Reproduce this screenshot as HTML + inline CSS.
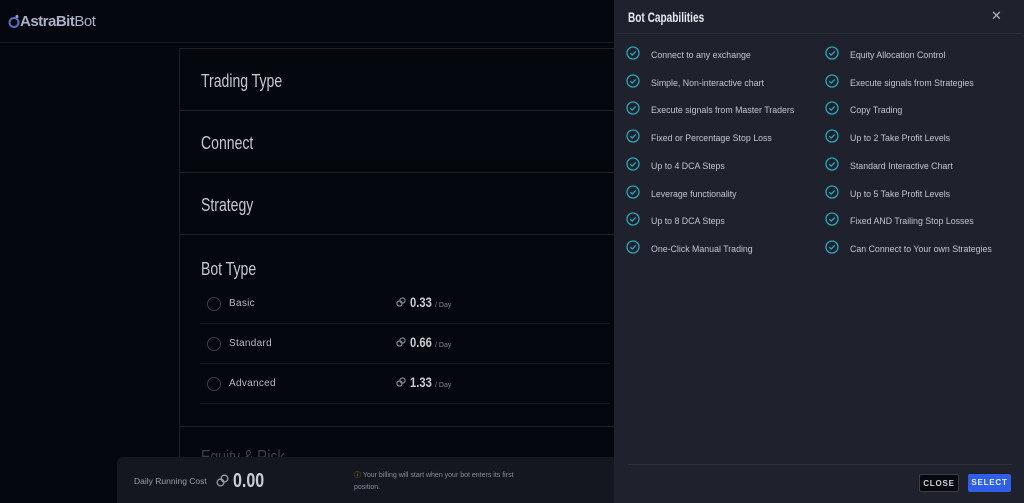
<!DOCTYPE html>
<html><head><meta charset="utf-8"><style>
*{margin:0;padding:0;box-sizing:border-box}
body{width:1024px;height:503px;overflow:hidden;background:#05070e;font-family:"Liberation Sans",sans-serif;position:relative;color:#c9ccd4}
.hdr{position:absolute;left:0;top:0;width:1024px;height:43px;border-bottom:1px solid #161a24}
.logo{position:absolute;left:8px;top:13px;font-size:15px;color:#aab0c8;font-weight:bold;letter-spacing:-0.5px}
.logo span{font-weight:normal}
.card{position:absolute;left:179px;top:48px;width:460px;height:420px;border:1px solid #1d212b;border-right:none}
.row{position:absolute;left:0;width:100%;border-bottom:1px solid #1d212b}
.cond{color:#c5c8cf;font-size:18px;position:absolute;left:21px;transform:scaleX(0.78);transform-origin:0 0;white-space:nowrap}
.opt{position:absolute;left:20px;width:410px;height:40px;border-bottom:1px solid #161a23;font-size:10px;color:#b7bac2}
.opt .r{position:absolute;left:7px;top:13px;width:14px;height:14px;border:1px solid #3a3e48;border-radius:50%}
.opt .n{position:absolute;left:29px;top:14px;letter-spacing:0.3px}
.opt .p{position:absolute;left:196px;top:10px;font-size:14px;font-weight:bold;color:#c9ccd3;white-space:nowrap}
.opt .p b{display:inline-block;transform:scaleX(0.8);transform-origin:0 50%;margin-left:4px;width:25px}
.opt .p i{font-style:normal;font-size:7px;color:#7d818a;font-weight:normal}
.bar{position:absolute;left:117px;top:457px;width:497px;height:46px;background:#141720;border-radius:6px 0 0 0}
.panel{position:absolute;left:614px;top:0;width:410px;height:503px;background:#1f222d}
.title{position:absolute;left:14px;top:9px;font-weight:bold;font-size:14px;color:#e6e8ee;transform:scaleX(0.72);transform-origin:0 0;white-space:nowrap}
.x{position:absolute;left:377px;top:8px;font-size:13px;color:#aeb2bc}
.sep{position:absolute;left:2px;top:33px;width:406px;height:1px;background:#2a2e3a}
.it{position:absolute;font-size:8.8px;color:#c3c6ce;white-space:nowrap}
.it svg{position:absolute;left:-25px;top:-4px}
.fsep{position:absolute;left:14px;top:464px;width:384px;height:1px;background:#2d303b}
.btn{position:absolute;top:474px;height:18px;font-size:8px;font-weight:bold;letter-spacing:0.8px;line-height:17px;text-align:center;border-radius:2px}
</style></head><body>
<div class="hdr"><div class="logo"><svg width="12" height="14" viewBox="0 0 12 14" style="vertical-align:-2px"><circle cx="6" cy="8.5" r="4.5" fill="none" stroke="#5a6fc0" stroke-width="2"/><circle cx="9" cy="2.5" r="1.5" fill="#8fa0e0"/></svg>AstraBit<span>Bot</span></div></div>
<div class="card">
<div class="row" style="top:0;height:62px"><div class="cond" style="top:22px">Trading Type</div></div>
<div class="row" style="top:62px;height:62px"><div class="cond" style="top:22px">Connect</div></div>
<div class="row" style="top:124px;height:62px"><div class="cond" style="top:22px">Strategy</div></div>
<div class="row" style="top:186px;height:192px">
<div class="cond" style="top:24px">Bot Type</div>
<div class="opt" style="top:49px"><div class="r"></div><div class="n">Basic</div><div class="p"><svg width="10" height="10" viewBox="0 0 10 10"><g fill="none" stroke="#8a8e98" stroke-width="1.1"><circle cx="3.5" cy="6.5" r="2.6"/><circle cx="6.5" cy="3.5" r="2.6"/></g></svg><b>0.33</b><i>/ Day</i></div></div>
<div class="opt" style="top:89px"><div class="r"></div><div class="n">Standard</div><div class="p"><svg width="10" height="10" viewBox="0 0 10 10"><g fill="none" stroke="#8a8e98" stroke-width="1.1"><circle cx="3.5" cy="6.5" r="2.6"/><circle cx="6.5" cy="3.5" r="2.6"/></g></svg><b>0.66</b><i>/ Day</i></div></div>
<div class="opt" style="top:129px"><div class="r"></div><div class="n">Advanced</div><div class="p"><svg width="10" height="10" viewBox="0 0 10 10"><g fill="none" stroke="#8a8e98" stroke-width="1.1"><circle cx="3.5" cy="6.5" r="2.6"/><circle cx="6.5" cy="3.5" r="2.6"/></g></svg><b>1.33</b><i>/ Day</i></div></div>
</div>
<div class="cond" style="top:398px;color:#3a3e48">Equity &amp; Risk</div>
</div>
<div class="bar">
<div style="position:absolute;left:17px;top:19px;font-size:8.5px;color:#9a9ea8">Daily Running Cost</div>
<svg style="position:absolute;left:99px;top:17px" width="13" height="13" viewBox="0 0 10 10"><g fill="none" stroke="#9a9ea8" stroke-width="1"><circle cx="3.5" cy="6.5" r="2.6"/><circle cx="6.5" cy="3.5" r="2.6"/></g></svg>
<div style="position:absolute;left:116px;top:13px;font-size:20px;font-weight:bold;color:#c9ccd3;transform:scaleX(0.8);transform-origin:0 0">0.00</div>
<div style="position:absolute;left:237px;top:13px;font-size:7px;color:#8a8e98;line-height:12px;width:175px"><span style="color:#c07a20">ⓘ</span> Your billing will start when your bot enters its first position.</div>
</div>
<div class="panel">
<div class="title">Bot Capabilities</div><div class="x">✕</div><div class="sep"></div>
<div id="items"></div>
<div class="fsep"></div>
<div class="btn" style="left:305px;width:40px;background:#07090f;border:1px solid #3a3d48;color:#d0d3da">CLOSE</div>
<div class="btn" style="left:354px;width:43px;background:#2f5ee8;color:#e8eeff">SELECT</div>
</div>
<script>
var L=["Connect to any exchange","Simple, Non-interactive chart","Execute signals from Master Traders","Fixed or Percentage Stop Loss","Up to 4 DCA Steps","Leverage functionality","Up to 8 DCA Steps","One-Click Manual Trading"];
var R=["Equity Allocation Control","Execute signals from Strategies","Copy Trading","Up to 2 Take Profit Levels","Standard Interactive Chart","Up to 5 Take Profit Levels","Fixed AND Trailing Stop Losses","Can Connect to Your own Strategies"];
var ic='<svg width="14" height="14" viewBox="0 0 14 14"><circle cx="7" cy="7" r="6" fill="none" stroke="#26a8b8" stroke-width="1.3"/><path d="M4.3 7.2l1.9 1.9 3.6-3.7" fill="none" stroke="#26a8b8" stroke-width="1.3"/></svg>';
var h="";
for(var i=0;i<8;i++){var y=50+i*27.7;h+='<div class="it" style="left:37px;top:'+y+'px">'+ic+L[i]+'</div><div class="it" style="left:236px;top:'+y+'px">'+ic+R[i]+'</div>';}
document.getElementById("items").innerHTML=h;
</script>
</body></html>
